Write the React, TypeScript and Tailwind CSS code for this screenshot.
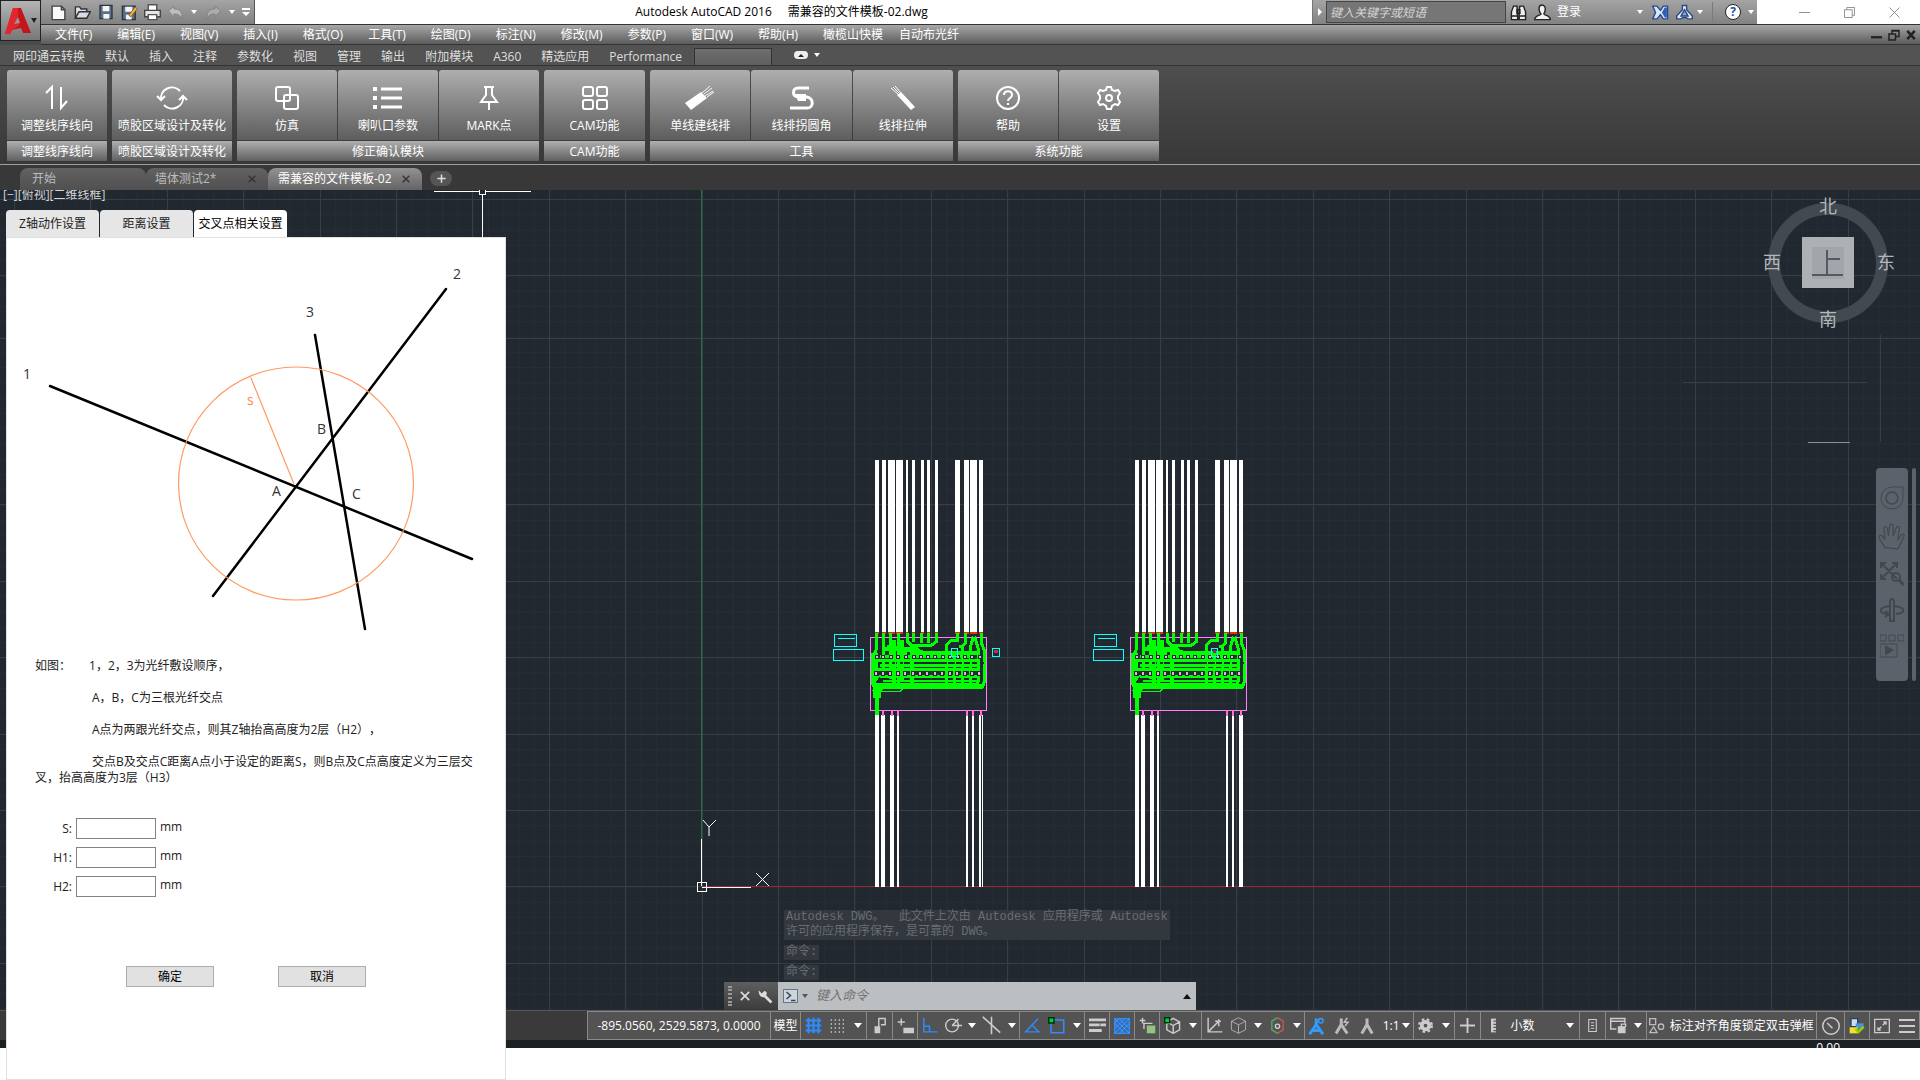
import type { ReactNode } from "react"

const caret = <span className="h-0 w-0 border-x-4 border-t-[5px] border-x-transparent border-t-white" />
const smallCaret = <span className="h-0 w-0 border-x-[3px] border-t-4 border-x-transparent border-t-white" />

function Icon({ children, size = 24, label }: { children: ReactNode; size?: number; label?: string }) {
  return (
    <svg width={size} height={size} viewBox="0 0 24 24" fill="none" stroke="currentColor" strokeWidth={2} aria-label={label}>
      {children}
    </svg>
  )
}

/* Title bar */
function QuickAccess() {
  return (
    <div className="flex h-6 w-[214px] shrink-0 items-center border-r border-[#555] bg-gradient-to-b from-[#a4a4a4] to-[#828282] pl-1.5">
      <button aria-label="新建" className="flex w-6 justify-center">
        <Icon size={17}><path d="M3 3h13l5 5v14H3z" fill="#fafafa" stroke="#444" /><path d="M16 3v5h5" stroke="#444" /></Icon>
      </button>
      <button aria-label="打开" className="flex w-6 justify-center">
        <Icon size={17}><path d="M2 20V4h6l2 3h8v4" fill="#dfe5ec" stroke="#333" /><path d="M2 20l5-9h16l-5 9z" fill="#d5dce4" stroke="#333" /></Icon>
      </button>
      <button aria-label="保存" className="flex w-6 justify-center">
        <Icon size={16}><path d="M3 2h18v20H3z" fill="#5d6f84" stroke="#2b3542" /><path d="M7 3h10v8H7zM8 15h9v7H8z" fill="#f2f5f8" stroke="none" /></Icon>
      </button>
      <button aria-label="另存为" className="flex w-6 justify-center">
        <Icon size={17}><path d="M2 3h18v19H2z" fill="#5d6f84" stroke="#2b3542" /><path d="M6 4h10v7H6zM7 15h8v7H7z" fill="#f2f5f8" stroke="none" /><path d="M11 16l9-12 3 3-9 11z" fill="#f0b13c" stroke="#7a4d10" strokeWidth="1" /></Icon>
      </button>
      <button aria-label="打印" className="flex w-6 justify-center">
        <Icon size={17}><path d="M6 1h12v9H6z" fill="#fff" stroke="#555" /><path d="M1 9h22v9H1z" fill="#e6e6e6" stroke="#444" /><path d="M6 15h12v7H6z" fill="#fff" stroke="#555" /></Icon>
      </button>
      <button aria-label="放弃" className="flex w-6 justify-center">
        <Icon size={17}><path d="M2 10l8-7v4c8 0 12 4 11 14-2-5-5-7-11-7v4z" fill="#b9bec2" stroke="#777" strokeWidth="1" /></Icon>
      </button>
      <span className="flex w-3.5 justify-center">{smallCaret}</span>
      <button aria-label="重做" className="flex w-6 justify-center">
        <Icon size={17}><path d="M22 10l-8-7v4C6 7 2 11 3 21c2-5 5-7 11-7v4z" fill="#a9adb0" stroke="#777" strokeWidth="1" /></Icon>
      </button>
      <span className="flex w-3.5 justify-center">{smallCaret}</span>
      <button aria-label="自定义" className="flex w-4 flex-col items-center gap-0.5">
        <span className="h-0.5 w-2 bg-white" />
        <span className="h-0 w-0 border-x-4 border-t-4 border-x-transparent border-t-white" />
      </button>
    </div>
  )
}

function InfoCenter() {
  return (
    <div className="flex h-6 w-[445px] shrink-0 items-center bg-gradient-to-b from-[#a4a4a4] to-[#828282] text-white">
      <span className="flex h-full w-3.5 items-center justify-center border-l border-[#777]">
        <span className="h-0 w-0 border-y-4 border-l-4 border-y-transparent border-l-white" />
      </span>
      <input
        aria-label="搜索"
        placeholder="键入关键字或短语"
        className="h-[22px] w-[180px] shrink-0 border border-[#444] bg-[#767676] px-[3px] italic placeholder:text-[#d5d5d5]"
      />
      <button aria-label="查找" className="flex w-6 shrink-0 justify-center">
        <Icon size={17}><path d="M5 3h5v6l1 13H2V11zM14 3h5l3 8v11h-9V9z" fill="#eee" stroke="#222" /><path d="M10 8h4v5h-4zM2 17h9M13 17h9" stroke="#222" /></Icon>
      </button>
      <button className="flex flex-1 items-center gap-1.5 pl-1">
        <Icon size={17}><path d="M8 3c3-3 8-1 8 4 0 3-1 5-2 7 0 2 9 2 9 8H1c0-6 9-6 9-8C8 12 6 7 8 3z" fill="#f2f2f2" stroke="#222" /></Icon>
        登录
      </button>
      <span className="flex w-4 justify-center">{smallCaret}</span>
      <button aria-label="Exchange" className="flex w-6 justify-center">
        <Icon size={17}><path d="M1 3h6l5 6 4-6h6v18h-6l-4-6-5 6H1l4-9z" fill="#dbe6f7" stroke="#274b8f" /><path d="M14 12l4-7h3v14h-3z" fill="#2f5db5" stroke="none" /></Icon>
      </button>
      <button aria-label="A360" className="flex w-6 justify-center">
        <Icon size={17}><path d="M9 2h6v6l8 9v4h-6l-3-2h-4l-3 2H1v-4l8-9z" fill="#e6edf8" stroke="#2a4a86" /><path d="M12 8l5 9H7z" fill="#8ca5c9" stroke="#2a4a86" /></Icon>
      </button>
      <span className="flex w-2 justify-center">{smallCaret}</span>
      <span className="mx-2 h-5 w-px bg-[#7a7a7a]" />
      <button aria-label="帮助" className="flex w-6 justify-center">
        <span className="flex h-4 w-4 items-center justify-center rounded-full border border-[#223] bg-white text-xs font-bold text-[#2453a6]">?</span>
      </button>
      <span className="flex w-3 justify-center">{smallCaret}</span>
    </div>
  )
}

const menus = ["文件(F)", "编辑(E)", "视图(V)", "插入(I)", "格式(O)", "工具(T)", "绘图(D)", "标注(N)", "修改(M)", "参数(P)", "窗口(W)", "帮助(H)"]

function TopBars() {
  return (
    <div className="flex bg-[#4a4a4a]">
      <button aria-label="应用程序菜单" className="flex h-[41px] w-[41px] shrink-0 items-center justify-center border border-[#222] bg-gradient-to-b from-[#b5b5b5] to-[#777]">
        <svg width="26" height="28" viewBox="0 0 26 28">
          <path d="M8 1h8l10 25h-8l-2-5-9 2-2 4H0z" fill="#c3161c" />
          <path d="M8 1h5v9l-4 7 5-1v3l-7 4-2 4H0z" fill="#e2262b" />
          <path d="M13 10l2 6-6 1z" fill="#999" />
        </svg>
        <span className="h-0 w-0 border-x-[3px] border-t-[5px] border-x-transparent border-t-[#222]" />
      </button>
      <div className="flex min-w-0 flex-1 flex-col">
        <div className="flex h-6 bg-white">
          <QuickAccess />
          <div className="flex flex-1 items-center justify-center gap-4 whitespace-pre pr-1 text-black">
            <span>Autodesk AutoCAD 2016</span>
            <span>需兼容的文件模板-02.dwg</span>
          </div>
          <InfoCenter />
          <div className="flex w-[163px] items-center justify-end gap-[34px] pr-5 text-[#888]">
            <button aria-label="最小化"><Icon size={11}><path d="M0 12h24" /></Icon></button>
            <button aria-label="还原"><Icon size={11}><path d="M1 6h17v17H1zM6 6V1h17v17h-5" /></Icon></button>
            <button aria-label="关闭"><Icon size={11}><path d="M1 1l22 22M23 1L1 23" /></Icon></button>
          </div>
        </div>
        <div className="flex h-[21px] items-center border-y border-[#333] bg-gradient-to-b from-[#a8a8a8] to-[#5c5c5c] pl-3.5 text-white">
          <div className="flex flex-1 gap-[25px]">
            {menus.map((m) => (
              <button key={m}>{m}</button>
            ))}
            <div className="flex gap-4">
              <button>橄榄山快模</button>
              <button>自动布光纤</button>
            </div>
          </div>
          <div className="flex items-center gap-1.5 pr-1 text-[#222]">
            <button aria-label="最小化文档"><Icon size={11}><path d="M0 18h24" strokeWidth="5" /></Icon></button>
            <button aria-label="还原文档"><Icon size={12}><path d="M2 10h13v12H2zM8 10V3h14v12h-7M8 4h14" strokeWidth="3" /></Icon></button>
            <button aria-label="关闭文档"><Icon size={10}><path d="M3 2l18 20M21 2L3 22" strokeWidth="6" /></Icon></button>
          </div>
        </div>
      </div>
    </div>
  )
}

/* Ribbon */
const ribbonTabs = ["网印通云转换", "默认", "插入", "注释", "参数化", "视图", "管理", "输出", "附加模块", "A360", "精选应用", "Performance"]

const panels = [
  { title: "调整线序线向", width: "w-[100px]", tools: [{ name: "调整线序线向", icon: <path d="M1 7l6-6v22M16 1v21l6-7" /> }] },
  {
    title: "喷胶区域设计及转化",
    width: "w-[120px]",
    tools: [{
      name: "喷胶区域设计及转化",
      icon: <path d="M1 14A11 11 0 0 1 20 5M23 10A11 11 0 0 1 4 19M-3 10l4 4 4-4M19 14l4-4 4 4" />,
    }],
  },
  {
    title: "修正确认模块",
    width: "w-[302px]",
    tools: [
      { name: "仿真", icon: <><rect x="1" y="1" width="14" height="14" rx="2" /><rect x="9" y="9" width="14" height="14" rx="2" /></> },
      { name: "喇叭口参数", icon: <><path d="M5 3h21M5 12h21M5 21h21" strokeWidth="3" /><path d="M-3 3h4M-3 12h4M-3 21h4" strokeWidth="4" /></> },
      { name: "MARK点", icon: <path d="M7 1h10M9 1v8l-5 7h16l-5-7V1M12 16v8" /> },
    ],
  },
  {
    title: "CAM功能",
    width: "w-[101px]",
    tools: [{
      name: "CAM功能",
      icon: <><rect x="0" y="1" width="10" height="9" rx="2" /><rect x="14" y="1" width="10" height="9" rx="2" /><rect x="0" y="14" width="10" height="9" rx="2" /><rect x="14" y="14" width="10" height="9" rx="2" /></>,
    }],
  },
  {
    title: "工具",
    width: "w-[303px]",
    tools: [
      { name: "单线建线排", icon: <><path d="M-3 17L13 6l6 6L3 24z" fill="currentColor" stroke="none" /><path d="M14 7l8-7M16 8l8-6M17 10l8-5M19 11l7-5" strokeWidth="1" /></> },
      { name: "线排拐圆角", icon: <><path d="M20 2H9c-6 0-6 8 0 9h9c7 1 7 11 0 11H1" strokeWidth="3" /><path d="M6 8h11v7H9z" fill="currentColor" stroke="none" /></> },
      { name: "线排拉伸", icon: <><path d="M6 9l4-3 14 15-4 3z" fill="currentColor" stroke="none" /><path d="M7 8L0 2M8 7L2 1M10 7L4 0" strokeWidth="1" /></> },
    ],
  },
  {
    title: "系统功能",
    width: "w-[201px]",
    tools: [
      { name: "帮助", icon: <><circle cx="12" cy="12" r="11" /><path d="M8 9c0-5 8-5 8 0 0 3-4 3-4 6M12 17v2" /></> },
      {
        name: "设置",
        icon: <><path d="M10 1h4l1 3 3 1 3-1 2 3-2 3v3l2 3-2 3-3-1-3 2-1 3h-4l-1-3-3-2-3 1-2-3 2-3v-3L1 7l2-3 3 1 3-1z" /><circle cx="12" cy="12" r="3" /></>,
      },
    ],
  },
]

function Ribbon() {
  return (
    <>
      <div className="flex h-[21px] items-end border-b border-[#333] bg-[#535353] pl-[13px] text-[#dedede]">
        <div className="flex gap-5">
          {ribbonTabs.map((t) => (
            <button key={t}>{t}</button>
          ))}
        </div>
        <button aria-label="插件" className="ml-3 h-[17px] w-[78px] border border-b-0 border-[#333] bg-gradient-to-b from-[#6e6e6e] to-[#606060]" />
        <button aria-label="最小化功能区" className="ml-[22px] flex h-4 items-center gap-1.5 pb-1">
          <span className="flex h-2 w-3.5 items-center justify-center rounded-sm bg-[#eee]">
            <span className="h-0 w-0 border-x-[3px] border-b-[3px] border-x-transparent border-b-[#222]" />
          </span>
          {smallCaret}
        </button>
      </div>
      <div className="flex h-[99px] gap-[5px] border-b border-[#a0a0a0] bg-gradient-to-b from-[#4e4e4e] to-[#383838] pl-[7px] pt-1 text-white">
        {panels.map((p) => (
          <section key={p.title} className={`flex flex-col gap-px ${p.width}`}>
            <div className="flex h-[70px] gap-px">
              {p.tools.map((t) => (
                <button key={t.name} className="flex flex-1 flex-col items-center gap-1.5 rounded-t-[3px] bg-gradient-to-b from-[#afafaf] to-[#5e5e5e] pt-4">
                  <svg width="24" height="24" viewBox="0 0 24 24" fill="none" stroke="currentColor" strokeWidth="2" className="overflow-visible">
                    {t.icon}
                  </svg>
                  <span className="leading-5">{t.name}</span>
                </button>
              ))}
            </div>
            <h2 className="h-5 bg-gradient-to-b from-[#b0b0b0] to-[#606060] text-center leading-[22px]">{p.title}</h2>
          </section>
        ))}
      </div>
    </>
  )
}

function FileTabs() {
  return (
    <nav className="flex h-[25px] items-end bg-[#383838] pl-5 text-[#bdbdbd]">
      <button className="h-[22px] w-[126px] rounded-t-lg bg-gradient-to-b from-[#626262] to-[#505050] pl-3 text-left">开始</button>
      <button className="flex h-[22px] w-[122px] items-center justify-between rounded-t-lg bg-gradient-to-b from-[#626262] to-[#505050] pl-[9px] pr-3">
        墙体测试2*
        <Icon size={8}><path d="M2 2l20 20M22 2L2 22" stroke="#333" strokeWidth="4" /></Icon>
      </button>
      <button className="flex h-[22px] w-[154px] items-center justify-between rounded-t-lg bg-gradient-to-b from-[#929292] to-[#646464] pl-2.5 pr-3 text-white">
        需兼容的文件模板-02
        <Icon size={8}><path d="M2 2l20 20M22 2L2 22" stroke="#333" strokeWidth="4" /></Icon>
      </button>
      <button aria-label="新图形" className="ml-2 mb-1 flex h-[15px] w-[22px] items-center justify-center rounded-lg bg-[#555] text-[#ddd]">
        <Icon size={9}><path d="M12 1v22M1 12h22" strokeWidth="4" /></Icon>
      </button>
    </nav>
  )
}

/* Drawing area */
const topWires = [[165, 12], [186, 13], [204, 21], [227, 21], [258, 7], [276, 9], [302, 9], [321, 9], [346, 9], [406, 13], [432, 14], [450, 20], [477, 13]]
const bottomWires = [[165, 12], [184, 11], [210, 12], [230, 8], [437, 6], [455, 6]]
const pads = [165, 184, 207, 229, 251, 275, 297, 318, 340, 363, 385, 408, 430, 451, 474]

function Board({ x, marker = false }: { x: number; marker?: boolean }) {
  return (
    <g transform={`translate(${x} 250) scale(0.3333)`}>
      <g fill="#fff">
        {topWires.map(([wx, w]) => <rect key={wx} x={wx} y="60" width={w} height="517" />)}
        {bottomWires.map(([wx, w]) => <rect key={wx} x={wx} y="825" width={w} height="515" />)}
        {marker ? <path d="M478 825h6v515h-6zM487 825h3v515h-3z" /> : <path d="M478 825h12v515h-12z" />}
      </g>
      <g fill="#e03010">
        {topWires.map(([wx, w]) => <rect key={wx} x={wx} y="575" width={w} height="6" />)}
      </g>
      <rect x="151.5" y="592.5" width="348" height="219" fill="none" stroke="#ff80ff" strokeWidth="4" />
      <path d="M189 811v16M216 811v16M234 811v16M441 811v16M459 811v16M484 811v16" stroke="#ff70d8" strokeWidth="6" />
      <g fill="none" stroke="#00ff00">
        <path d="M171 578v45l-10 25v80M192 578v130M212 578v140M236 578v150M262 578v26l12 12h60l16-12v-26M282 578v28M306 578v32M325 578v32" strokeWidth="9" />
        <path d="M222 600v130M246 600v120M200 620l50 8h40l20 12" strokeWidth="12" />
        <path d="M412 578v25h-20l-12 12v120M438 578v30l-12 12h-10M460 590l-8 30v110M464 590l12 40v90l-8 18M484 578v30l10 25v90l-6 16H445" strokeWidth="9" />
        <path d="M276 618v118M404 640v90M428 620v110M170 640v80" strokeWidth="11" />
        <path d="M250 638h230" strokeWidth="12" />
        <path d="M185 628h110" strokeWidth="12" />
        <path d="M180 650h280M170 661h300M180 676h300M170 689h310M180 711h290" strokeWidth="9" />
        <path d="M190 722h280M180 731h290" strokeWidth="6" />
        <path d="M171 765l14-26h305" strokeWidth="14" />
        <path d="M171 825v-70l-12-25v-90" strokeWidth="12" />
        <path d="M160 735l20-30M160 752l25 2h55l12-10M157 750l14 20" strokeWidth="4" />
        <path d="M171 730v45" strokeWidth="26" />
      </g>
      <g fill="#212830">
        {pads.map((p) => <rect key={p} x={p + 10} y="667" width="9" height="6" />)}
        <rect x="301" y="625" width="70" height="6" />
        <rect x="262" y="636" width="8" height="10" />
      </g>
      <g fill="#f0a8e8" stroke="#212830" strokeWidth="3">
        {pads.map((p) => <rect key={p} x={p + 2} y="647" width="9" height="10" />)}
        {pads.map((p) => <rect key={p} x={p} y="696" width="9" height="10" />)}
      </g>
      <g fill="none" stroke="#10ffff" strokeWidth="4">
        <path d="M43.5 583.5h66v36h-66zM40.5 628.5h90v33h-90zM54 595.5h50M394.5 626.5h18v24h-18z" />
        {marker && <path d="M517.5 625.5h21v24h-21z" />}
      </g>
      {marker ? <path d="M522 630h11v10h-11z" fill="#e02040" /> : <path d="M399 631h9v9h-9z" fill="#a02060" />}
    </g>
  )
}

const columns = Array.from({ length: 44 }, (_, i) => 702 + (i - 9) * 76.4)
const rows = [9, 85, 148, 314, 391, 467, 544, 620, 696, 773]

function Drawing() {
  return (
    <svg className="absolute inset-0 h-full w-full" shapeRendering="crispEdges">
      <defs>
        <pattern id="minor" x="702" y="9" width="15.28" height="15.28" patternUnits="userSpaceOnUse">
          <path d="M0 0.5h15.28M0.5 0v15.28" stroke="#262d36" />
        </pattern>
      </defs>
      <rect width="100%" height="100%" fill="url(#minor)" />
      <g stroke="#363e48">
        {columns.map((c) => <line key={c} x1={c} x2={c} y1="0" y2="100%" />)}
        {rows.map((r) => <line key={r} x1="0" x2="100%" y1={r + 0.5} y2={r + 0.5} />)}
        <path d="M1683 192.5h184M1880.5 145v107" />
      </g>
      <path d="M701.5 0v697" stroke="#2b7330" />
      <line x1="702" x2="100%" y1="696.5" y2="696.5" stroke="#9c2634" />
      <g stroke="#fff" fill="none">
        <path d="M701.5 649v47M702 697.5h49M697.5 692.5h9v9h-9zM434 1.5h45M486 1.5h45M482.5 5v50M479.5 -2v6h6v-6" />
        <path d="M703 630l6 7 7-7M709 637v9M756 683l13 13M769 683l-13 13" shapeRendering="auto" />
      </g>
      <Board x={820} marker />
      <Board x={1080} />
    </svg>
  )
}

function ViewCube() {
  return (
    <div className="absolute right-[25px] top-0 h-[150px] w-[136px] text-lg leading-5 text-[#b4b7ba]">
      <svg className="absolute left-2 top-3" width="122" height="122" viewBox="0 0 122 122">
        <circle cx="61" cy="61" r="54" fill="none" stroke="#434951" strokeWidth="12" />
        <rect x="35" y="35" width="52" height="51" fill="#aeb1b3" />
        <rect x="45" y="45" width="32" height="32" fill="#a1a6aa" />
        <path d="M60 48v25M60 57h13M45 73h31" stroke="#555a60" strokeWidth="2" />
      </svg>
      <span className="absolute left-[60px] top-[6px]">北</span>
      <span className="absolute left-[4px] top-[62px]">西</span>
      <span className="absolute right-0 top-[62px]">东</span>
      <span className="absolute left-[60px] top-[119px]">南</span>
    </div>
  )
}

function NavigationBar() {
  return (
    <div className="absolute right-1 top-[278px] flex h-[213px] gap-1">
      <div className="flex w-8 flex-col items-center gap-3 rounded bg-[#5c626b] pt-[18px] text-[#43484f]">
        <Icon size={24}><path d="M12 1h11v11a11 11 0 1 1-11-11z" strokeWidth="1" /><circle cx="12" cy="12" r="6" strokeWidth="1.5" /></Icon>
        <Icon size={28}><path d="M6 22c-2-4-6-8-5-10s3 0 5 3L5 5c1-2 3-1 3 1l1 6 1-9c1-2 3-1 3 1v8l3-8c2-1 3 0 2 3l-1 8 3-4c2-1 3 0 2 2l-5 10z" strokeWidth="1" /></Icon>
        <Icon size={24}><path d="M1 1l16 16M17 1L1 17M1 6V1h5M12 1h5v5M1 12v5h5" /><circle cx="16" cy="15" r="4" /><path d="M19 18l5 5" strokeWidth="3" /></Icon>
        <Icon size={24}><path d="M10 3v20h4V3l-2-3zM9 8C-2 10-2 15 8 16M15 8c11 2 11 7 1 8M5 13l4 3-4 3" /></Icon>
        <Icon size={24}><path d="M0 1h6v6H0zM9 1h6v6H9zM18 1h6v6h-6zM0 10h17v13H0z" strokeWidth="1" /><path d="M6 13l6 3-6 4z" fill="currentColor" /></Icon>
      </div>
      <div className="w-1 rounded bg-[#5c626b]" />
    </div>
  )
}

function CommandLine() {
  return (
    <div className="absolute bottom-0 left-[724px] w-[472px]">
      <div className="mb-[2px] ml-[60px] flex flex-col items-start gap-[5px] whitespace-pre font-['Liberation_Mono','Noto_Sans_CJK_SC',monospace] leading-[15px] text-[#696d72]">
        <p className="bg-[#33383f] px-0.5">
          Autodesk DWG。  此文件上次由 Autodesk 应用程序或 Autodesk{"\n"}许可的应用程序保存，是可靠的 DWG。
        </p>
        <p className="bg-[#33383f] px-0.5">命令:</p>
        <p className="bg-[#33383f] px-0.5">命令:</p>
      </div>
      <div className="flex h-7">
        <div className="flex w-[54px] items-center gap-2 bg-gradient-to-b from-[#5e5e5e] to-[#3c3c3c] pl-1 text-[#ddd]">
          <span className="h-5 w-1 border-x-2 border-dotted border-[#999]" />
          <button aria-label="关闭"><Icon size={10}><path d="M2 2l20 20M22 2L2 22" strokeWidth="4" /></Icon></button>
          <button aria-label="自定义"><Icon size={15}><path d="M1 2l5 5 4-4C14 3 15 7 13 10l10 10-3 3L10 13C5 14 1 10 1 2z" fill="currentColor" stroke="none" /></Icon></button>
        </div>
        <div className="flex flex-1 items-center gap-1 bg-[#bcbfc1] px-[5px] text-[#444]">
          <span className="flex h-[14px] w-[15px] items-center justify-center border border-[#687585] bg-[#ccd4dc]">
            <Icon size={12}><path d="M3 4l8 7-8 7M12 21h9" stroke="#33465f" strokeWidth="3" /></Icon>
          </span>
          <span className="h-0 w-0 border-x-[3px] border-t-4 border-x-transparent border-t-[#555]" />
          <input aria-label="命令" placeholder="键入命令" className="ml-1 min-w-0 flex-1 bg-transparent text-[13px] italic placeholder:text-[#707274]" />
          <span className="h-0 w-0 border-x-4 border-b-[5px] border-x-transparent border-b-[#111]" />
        </div>
      </div>
    </div>
  )
}

/* Status bar */
function Cell({ children, width, label }: { children: ReactNode; width: string; label?: string }) {
  return (
    <button aria-label={label} className={`flex h-full shrink-0 items-center justify-around border-r border-[#8a8a8a] ${width}`}>
      {children}
    </button>
  )
}

function StatusBar() {
  return (
    <footer className="flex h-[30px] justify-end border-t border-[#555] bg-[#3a3a3a] text-[#ccc]">
      <div className="flex border-y border-l border-[#8a8a8a] bg-[#535353] whitespace-nowrap">
        <Cell width="w-[183px] text-white">-895.0560, 2529.5873, 0.0000</Cell>
        <Cell width="w-[30px] text-white">模型</Cell>
        <Cell width="w-[66px]" label="栅格">
          <Icon size={17}><path d="M1 5h22M1 12h22M1 19h22M5 1v22M12 1v22M19 1v22" stroke="#2f8cff" strokeWidth="3" /></Icon>
          <Icon size={16}><path d="M1 3h22M1 9h22M1 15h22M1 21h22" strokeDasharray="2 4" /></Icon>
          {caret}
        </Cell>
        <Cell width="w-[26px]" label="推断约束"><Icon size={17}><path d="M11 22V2h9v9h-6" /><path d="M6 14h6v8H6z" fill="currentColor" /></Icon></Cell>
        <Cell width="w-[25px]" label="动态输入"><Icon size={17}><path d="M1 7h10M6 2v10" /><path d="M10 16h14v6H10z" fill="currentColor" /></Icon></Cell>
        <Cell width="w-[102px]" label="正交与极轴">
          <Icon size={17}><path d="M4 1v20h19M4 13h8v8" stroke="#2f8cff" /></Icon>
          <Icon size={17}><circle cx="10" cy="12" r="9" /><path d="M10 12h14M10 12l9-9" /></Icon>
          {caret}
          <Icon size={19}><path d="M1 1l22 20M12 1v22" /></Icon>
          {caret}
        </Cell>
        <Cell width="w-[65px]" label="对象捕捉">
          <Icon size={17}><path d="M1 21h22M3 20L20 2M12 12l8 8" stroke="#2f8cff" /></Icon>
          <Icon size={18}><path d="M4 4h17v17H4z" stroke="#2f8cff" /><path d="M1 1h7v7H1z" fill="#0c5" stroke="#030" /></Icon>
          {caret}
        </Cell>
        <Cell width="w-[25px]" label="线宽"><Icon size={17}><path d="M0 4h24M0 11h15M16 11h8M0 19h18" strokeWidth="4" /></Icon></Cell>
        <Cell width="w-[25px]" label="透明度"><Icon size={16}><path d="M1 1h22v22H1z" fill="#2f6fc0" stroke="#2f8cff" /><path d="M1 8l7-7M1 16L16 1M1 23L23 1M8 23L23 8M1 8l15 15M1 1l22 22M8 1l15 15" stroke="#58a6ff" strokeWidth="1" /></Icon></Cell>
        <Cell width="w-[25px]" label="选择循环"><Icon size={17}><path d="M1 5h8M5 1v8M7 17V9h12" /><path d="M11 12h12v11H11z" fill="#93c47d" stroke="none" /></Icon></Cell>
        <Cell width="w-[42px]" label="三维捕捉">
          <Icon size={17}><path d="M13 2l9 5v11l-9 5-9-5V7zM4 7l9 5 9-5M13 12v11" /><path d="M1 1h7v7H1z" fill="#0c5" stroke="#030" /></Icon>
          {caret}
        </Cell>
        <Cell width="w-[103px]" label="动态 UCS">
          <Icon size={17}><path d="M3 1v20h20M3 21L18 6M18 3v10M13 6h8" /></Icon>
          <Icon size={17}><path d="M12 1l10 5v12l-10 5-10-5V6zM2 6l10 5 10-5M12 11v12" strokeWidth="1" /></Icon>
          {caret}
          <Icon size={17}><path d="M12 1l8 5v12l-8 5" stroke="#c55" /><path d="M12 1L4 6v12l8 5" stroke="#5a6" /><circle cx="12" cy="13" r="3" /></Icon>
          {caret}
        </Cell>
        <Cell width="w-[109px] text-white" label="注释比例">
          <Icon size={18}><path d="M11 2v8L2 23M11 10l9 13M7 18h9" stroke="#2f9cff" strokeWidth="4" /><circle cx="17" cy="5" r="3" stroke="#2f9cff" /></Icon>
          <Icon size={18}><path d="M11 2v8L4 22M11 10l8 12" stroke="#bbb" strokeWidth="4" /><path d="M19 1l-4 6h5l-4 5" stroke="#bbb" /></Icon>
          <Icon size={18}><path d="M12 2v8L5 22M12 10l7 12" stroke="#bbb" strokeWidth="4" /></Icon>
          <span className="flex items-center gap-0.5">1:1{caret}</span>
        </Cell>
        <Cell width="w-[41px]" label="工作空间">
          <Icon size={15}><circle cx="12" cy="12" r="6" strokeWidth="6" /><circle cx="12" cy="12" r="10" strokeWidth="4" strokeDasharray="4 4" /></Icon>
          {caret}
        </Cell>
        <Cell width="w-[26px]" label="注释监视器"><Icon size={15}><path d="M12 0v24M0 12h24" strokeWidth="3" /></Icon></Cell>
        <Cell width="w-[99px] text-white" label="单位">
          <Icon size={15}><path d="M8 1h8v22H8z" fill="#ccc" stroke="none" /><path d="M12 5h5M12 10h5M12 15h5M12 20h5" stroke="#535353" /></Icon>
          小数
          <span className="w-3" />
          {caret}
        </Cell>
        <Cell width="w-[26px]" label="快捷特性"><Icon size={13}><path d="M5 1h14v22H5zM9 7h6M9 12h6M9 17h6" /></Icon></Cell>
        <Cell width="w-[41px]" label="锁定界面">
          <Icon size={17}><path d="M9 17H1V2h20v7M1 6h20" /><path d="M12 14h9v8h-9z" fill="currentColor" /><path d="M16 14v-4h6v4" /></Icon>
          {caret}
        </Cell>
        <Cell width="w-[170px] text-white" label="隔离对象">
          <Icon size={16}><path d="M1 1h9v9H1zM1 22h11l-5-9z" stroke="#bbb" /><circle cx="18" cy="13" r="4" stroke="#bbb" /></Icon>
          标注对齐角度锁定双击弹框
        </Cell>
        <Cell width="w-[28px]" label="硬件加速"><Icon size={18}><circle cx="12" cy="12" r="11" /><path d="M7 8l7 7" /></Icon></Cell>
        <Cell width="w-[25px]" label="性能"><Icon size={16}><path d="M3 1h10v12H3z" fill="#cde" stroke="#246" /><path d="M10 8h12v8H10z" fill="#4d90d8" stroke="none" /><path d="M1 14h12v9H1z" fill="#f3e02b" stroke="none" /><path d="M10 16l4 5 8-8" stroke="#9c0" strokeWidth="4" /></Icon></Cell>
        <Cell width="w-[50px]" label="全屏与自定义">
          <Icon size={16}><path d="M1 2h22v20H1zM13 11l5-5M14 6h4v4M11 13l-5 5M6 14v4h4" /></Icon>
          <Icon size={16}><path d="M0 3h24M0 12h24M0 21h24" strokeWidth="3" /></Icon>
        </Cell>
      </div>
    </footer>
  )
}

/* Crossing point settings */
function CrossingDiagram() {
  return (
    <svg width="498" height="412" viewBox="0 0 498 412" fill="none" strokeLinecap="round" className="text-sm">
      <g stroke="#000" strokeWidth="2.5">
        <path d="M43 148L465 321M439 51L206 358M308 97l50 294" />
      </g>
      <g stroke="#ff9a60" strokeWidth="1.2">
        <ellipse cx="289" cy="245.5" rx="117.5" ry="116.5" />
        <path d="M244 140l43 106" />
      </g>
      <g fill="#333">
        <text x="16" y="141">1</text>
        <text x="446" y="41">2</text>
        <text x="299" y="79">3</text>
        <text x="310" y="196">B</text>
        <text x="265" y="258">A</text>
        <text x="345" y="261">C</text>
        <text x="240" y="167" fill="#ff8840">s</text>
      </g>
    </svg>
  )
}

function SettingsDialog() {
  return (
    <div className="absolute bottom-0 left-[6px] top-[210px] flex w-[500px] flex-col text-[#222]">
      <div role="tablist" className="flex h-[27px] gap-px">
        <button role="tab" className="w-[93px] rounded-t-sm bg-[#e6e6e6]">Z轴动作设置</button>
        <button role="tab" className="w-[93px] rounded-t-sm bg-[#e6e6e6]">距离设置</button>
        <button role="tab" aria-selected className="w-[93px] rounded-t-sm bg-white text-black">交叉点相关设置</button>
      </div>
      <form className="flex-1 border border-[#e0e0e0] bg-white">
        <CrossingDiagram />
        <div className="flex w-[470px] flex-col gap-4 pl-7 pt-2 leading-4 [text-spacing-trim:space-all]">
          <p>如图：<span className="ml-[18px]">1，2，3为光纤敷设顺序，</span></p>
          <p className="indent-[57px]">A，B，C为三根光纤交点</p>
          <p className="indent-[57px]">A点为两跟光纤交点，则其Z轴抬高高度为2层（H2），</p>
          <p className="indent-[57px]">交点B及交点C距离A点小于设定的距离S，则B点及C点高度定义为三层交叉，抬高高度为3层（H3）</p>
        </div>
        <div className="mt-8 flex flex-col gap-2">
          {["S", "H1", "H2"].map((f) => (
            <div key={f} className="flex h-[21px] items-center gap-1">
              <label htmlFor={f} className="w-[65px] text-right">{f}:</label>
              <input id={f} className="h-[21px] w-20 border border-[#828282] px-1" />
              <span className="self-start leading-[18px]">mm</span>
            </div>
          ))}
        </div>
        <div className="mt-[69px] flex gap-16 pl-[119px] text-black">
          <button type="button" className="h-[21px] w-[88px] border border-[#adadad] bg-[#e1e1e1]">确定</button>
          <button type="button" className="h-[21px] w-[88px] border border-[#adadad] bg-[#e1e1e1]">取消</button>
        </div>
      </form>
    </div>
  )
}

export default function App() {
  return (
    <div className="relative flex min-h-screen flex-col bg-white font-['Open_Sans','Noto_Sans_CJK_SC',sans-serif] text-xs">
      <TopBars />
      <Ribbon />
      <FileTabs />
      <main className="relative min-h-[500px] flex-1 overflow-hidden bg-[#212830]">
        <Drawing />
        <span className="absolute -top-[3px] left-[3px] text-[#d5d5d5]">[−][俯视][二维线框]</span>
        <ViewCube />
        <span className="absolute right-[70px] top-[252px] h-px w-[42px] bg-[#8b8f94]" />
        <NavigationBar />
        <CommandLine />
      </main>
      <StatusBar />
      <div className="flex h-2 justify-end overflow-hidden bg-[#1b2023] pr-20 leading-4 text-white">
        <span>0.00</span>
      </div>
      <div className="h-8" />
      <SettingsDialog />
    </div>
  )
}
